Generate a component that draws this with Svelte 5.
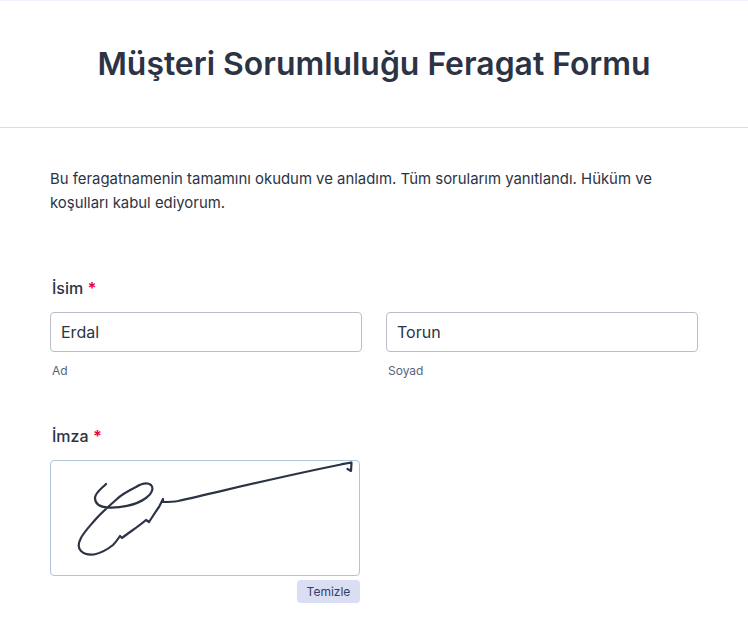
<script>
  let firstName = 'Erdal';
  let lastName = 'Torun';

  const stroke =
    'M55 23 C50 28 44 32 44 37 C44 43 48 46 57 46.5 C68 47 84 45 95 37 C101 33 103 27 100 24 C96 21 90 23 85 26 C77 30 71 33 66 38 C58 45 50 52 44 59 C38 66 32 72 29.5 78 C27.5 82 27 87 30 90 C33 93 38 94 43 93.5 C50 92 57 88 62 84 C65 81 67 78 69 75 L71 77 C77 72 87 66 95 59 L98 61 C102 55 105 50 108 46 L112 38 L112 41 C117 41 122 41 127 40 C180 28 240 13 300.5 1.5 L291 3 M300.5 1.5 L300 10 L296.5 8';
</script>

<div class="page">
  <header class="head">
    <h1>Müşteri Sorumluluğu Feragat Formu</h1>
  </header>

  <main class="body">
    <p class="intro">
      Bu feragatnamenin tamamını okudum ve anladım. Tüm sorularım yanıtlandı. Hüküm ve koşulları kabul ediyorum.
    </p>

    <section class="field name">
      <div class="label">İsim <span class="req">*</span></div>
      <div class="cols">
        <label class="col">
          <input type="text" bind:value={firstName} />
          <span class="sub">Ad</span>
        </label>
        <label class="col">
          <input type="text" bind:value={lastName} />
          <span class="sub">Soyad</span>
        </label>
      </div>
    </section>

    <section class="field sign">
      <div class="label">İmza <span class="req">*</span></div>
      <div class="pad-wrap">
        <div class="pad">
          <svg viewBox="0 0 308 114" width="308" height="114" aria-hidden="true">
            <path d={stroke} />
          </svg>
        </div>
        <button type="button" class="clear">Temizle</button>
      </div>
    </section>
  </main>
</div>

<style>
  :global(body) {
    margin: 0;
    background: #fff;
  }

  .page {
    font-family: Inter, "Liberation Sans", sans-serif;
    color: #2c3345;
    border-top: 1px solid #f3f3fe;
    min-height: 630px;
  }

  .head {
    height: 126px;
    display: flex;
    align-items: center;
    justify-content: center;
    border-bottom: 1px solid #dcdce4;
  }

  h1 {
    margin: 0;
    font-size: 31.9px;
    font-weight: 600;
    line-height: 40px;
  }

  .body {
    padding: 39px 50px 0;
  }

  .intro {
    margin: 0;
    font-size: 14.9px;
    line-height: 24px;
  }

  .field {
    display: flex;
    flex-direction: column;
  }

  .name {
    margin-top: 61px;
  }

  .sign {
    margin-top: 45px;
  }

  .label {
    padding-left: 2px;
    font-size: 16px;
    font-weight: 500;
    line-height: 24px;
  }

  .req {
    color: #f0003c;
    font-weight: 700;
  }

  .cols {
    display: grid;
    grid-template-columns: 312px 312px;
    gap: 24px;
    margin-top: 12px;
  }

  .col {
    display: flex;
    flex-direction: column;
  }

  input {
    box-sizing: border-box;
    width: 100%;
    height: 40px;
    padding: 0 10px;
    border: 1px solid #b8bdc9;
    border-radius: 4px;
    font: 400 16px Inter, "Liberation Sans", sans-serif;
    color: #2c3345;
    outline: none;
  }

  .sub {
    margin-top: 11px;
    padding-left: 2px;
    font-size: 12px;
    line-height: 16px;
    color: #57647e;
  }

  .pad-wrap {
    width: 310px;
    margin-top: 12px;
    display: flex;
    flex-direction: column;
    align-items: flex-end;
  }

  .pad {
    box-sizing: border-box;
    width: 310px;
    height: 116px;
    border: 1px solid #aec4dc;
    border-radius: 4px;
  }

  svg {
    display: block;
  }

  path {
    fill: none;
    stroke: #2c3345;
    stroke-width: 2.2;
    stroke-linecap: round;
    stroke-linejoin: round;
  }

  .clear {
    margin-top: 4px;
    height: 23px;
    width: 63px;
    padding: 0;
    border: none;
    border-radius: 4px;
    background: #dadef3;
    color: #343c6a;
    font: 400 12px Inter, "Liberation Sans", sans-serif;
  }
</style>
